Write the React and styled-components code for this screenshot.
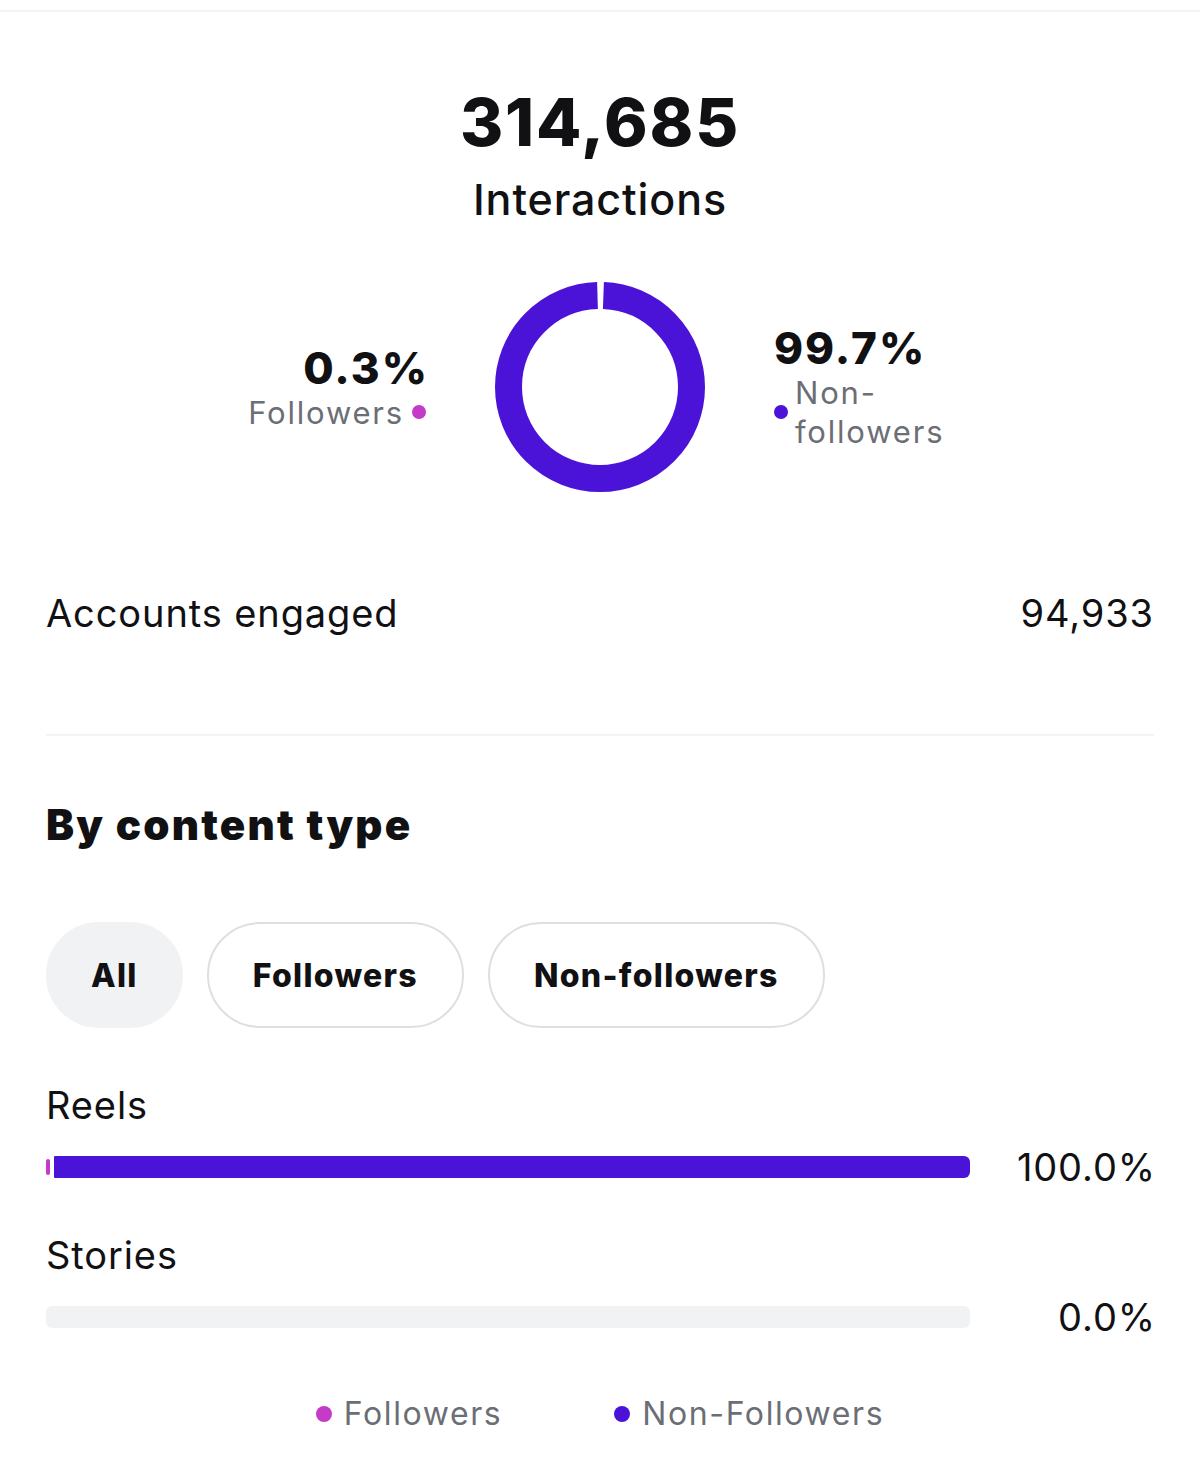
import React from "react";
import styled, { createGlobalStyle } from "styled-components";

const PURPLE = "#4B13D7";
const PINK = "#C43BC8";
const GRAY = "#6C6E75";
const INK = "#111114";

const Global = createGlobalStyle`
  html, body { margin: 0; padding: 0; background: #fff; }
  body { font-family: Inter, "Noto Sans", "Liberation Sans", sans-serif; color: ${INK}; -webkit-font-smoothing: antialiased; }
`;

const Page = styled.div`
  width: 1200px;
  display: flex;
  flex-direction: column;
`;

const TopRule = styled.div`
  margin-top: 10px;
  height: 2px;
  background: #f3f3f4;
`;

const Hero = styled.section`
  display: flex;
  flex-direction: column;
  align-items: center;
  padding-top: 70px;
`;

const BigNumber = styled.div`
  font-size: 66px;
  line-height: 80px;
  font-weight: 800;
  letter-spacing: 1.8px;
`;

const HeroLabel = styled.div`
  margin-top: 11px;
  font-size: 43px;
  line-height: 53px;
  font-weight: 500;
  letter-spacing: 0.9px;
`;

const DonutRow = styled.div`
  margin-top: 56px;
  display: grid;
  grid-template-columns: 1fr auto 1fr;
  column-gap: 69px;
  align-items: center;
`;

const Side = styled.div`
  display: flex;
  flex-direction: column;
  align-items: ${(p) => (p.$align === "left" ? "flex-end" : "flex-start")};
  justify-self: ${(p) => (p.$align === "left" ? "end" : "start")};
`;

const Percent = styled.div`
  font-size: 44px;
  line-height: 50px;
  font-weight: 800;
  letter-spacing: 2px;
  margin-right: ${(p) => p.$mr || 0}px;
`;

const LegendLine = styled.div`
  display: flex;
  align-items: center;
  gap: ${(p) => p.$gap || 10}px;
`;

const SideLabel = styled.div`
  font-size: 31px;
  line-height: 39px;
  color: ${GRAY};
  font-weight: 400;
  letter-spacing: 1.8px;
`;

const Dot = styled.span`
  display: inline-block;
  flex: none;
  width: ${(p) => p.$size || 14}px;
  height: ${(p) => p.$size || 14}px;
  border-radius: 50%;
  background: ${(p) => p.$color};
`;

const DonutSvg = styled.svg`
  display: block;
  width: 210px;
  height: 210px;
`;

const Body = styled.section`
  padding: 0 46px 0 46px;
  display: flex;
  flex-direction: column;
`;

const StatRow = styled.div`
  margin-top: 98px;
  display: flex;
  justify-content: space-between;
  align-items: center;
  font-size: 38px;
  line-height: 46px;
  font-weight: 400;
  letter-spacing: 0.9px;
`;

const Rule = styled.div`
  margin-top: 98px;
  height: 2px;
  background: #f4f4f5;
`;

const Heading = styled.h2`
  margin: 64px 0 0;
  font-size: 42px;
  line-height: 50px;
  font-weight: 900;
  letter-spacing: 2.2px;
`;

const Chips = styled.div`
  margin-top: 72px;
  display: flex;
  gap: 24px;
`;

const Chip = styled.button`
  height: 106px;
  padding: 0 ${(p) => (p.$active ? 43 : 44)}px;
  border-radius: 53px;
  border: 2px solid ${(p) => (p.$active ? "#f1f2f4" : "#dedfe1")};
  background: ${(p) => (p.$active ? "#f1f2f4" : "#fff")};
  font-family: inherit;
  font-size: 32px;
  font-weight: 800;
  letter-spacing: 1.3px;
  color: ${INK};
  cursor: pointer;
`;

const RowLabel = styled.div`
  margin-top: ${(p) => p.$mt}px;
  font-size: 38px;
  line-height: 46px;
  font-weight: 400;
  letter-spacing: 0.9px;
`;

const BarRow = styled.div`
  margin-top: 16px;
  display: grid;
  grid-template-columns: 1fr 184px;
  align-items: center;
`;

const Track = styled.div`
  height: 22px;
  border-radius: 6px;
  background: ${(p) => (p.$empty ? "#f1f2f4" : "transparent")};
  display: flex;
  align-items: center;
  gap: 4px;
`;

const Sliver = styled.div`
  width: 4px;
  height: 16px;
  border-radius: 2px;
  background: ${PINK};
  flex: none;
`;

const Fill = styled.div`
  height: 22px;
  flex: 1;
  background: ${PURPLE};
  border-radius: 1px 6px 6px 1px;
`;

const BarValue = styled.div`
  text-align: right;
  font-size: 38px;
  line-height: 46px;
  font-weight: 400;
  letter-spacing: 0.9px;
  margin-right: -2px;
`;

const Legend = styled.div`
  margin-top: 54px;
  display: flex;
  justify-content: center;
  gap: 112px;
  padding-bottom: 40px;
`;

const LegendText = styled.span`
  font-size: 32px;
  line-height: 40px;
  color: ${GRAY};
  letter-spacing: 1.6px;
`;

function Donut() {
  const r = 91.5;
  const c = 2 * Math.PI * r;
  const gap = 7;
  return (
    <DonutSvg viewBox="0 0 210 210">
      <circle
        cx="105"
        cy="105"
        r={r}
        fill="none"
        stroke={PURPLE}
        strokeWidth="27"
        strokeDasharray={`${c - gap} ${gap}`}
        strokeDashoffset={-gap / 2}
        transform="rotate(-90 105 105)"
      />
    </DonutSvg>
  );
}

export default function App() {
  return (
    <Page>
      <Global />
      <TopRule />
      <Hero>
        <BigNumber>314,685</BigNumber>
        <HeroLabel>Interactions</HeroLabel>
      </Hero>
      <DonutRow>
        <Side $align="left">
          <Percent $mr={-3}>0.3%</Percent>
          <LegendLine $gap={8}>
            <SideLabel>Followers</SideLabel>
            <Dot $color={PINK} $size={14} />
          </LegendLine>
        </Side>
        <Donut />
        <Side $align="right">
          <Percent>99.7%</Percent>
          <LegendLine $gap={7}>
            <Dot $color={PURPLE} $size={14} />
            <SideLabel>
              Non-
              <br />
              followers
            </SideLabel>
          </LegendLine>
        </Side>
      </DonutRow>
      <Body>
        <StatRow>
          <span>Accounts engaged</span>
          <span>94,933</span>
        </StatRow>
        <Rule />
        <Heading>By content type</Heading>
        <Chips>
          <Chip $active>All</Chip>
          <Chip>Followers</Chip>
          <Chip>Non-followers</Chip>
        </Chips>
        <RowLabel $mt={54}>Reels</RowLabel>
        <BarRow>
          <Track>
            <Sliver />
            <Fill />
          </Track>
          <BarValue>100.0%</BarValue>
        </BarRow>
        <RowLabel $mt={42}>Stories</RowLabel>
        <BarRow>
          <Track $empty />
          <BarValue>0.0%</BarValue>
        </BarRow>
        <Legend>
          <LegendLine $gap={12}>
            <Dot $color={PINK} $size={16} />
            <LegendText>Followers</LegendText>
          </LegendLine>
          <LegendLine $gap={12}>
            <Dot $color={PURPLE} $size={16} />
            <LegendText>Non-Followers</LegendText>
          </LegendLine>
        </Legend>
      </Body>
    </Page>
  );
}
